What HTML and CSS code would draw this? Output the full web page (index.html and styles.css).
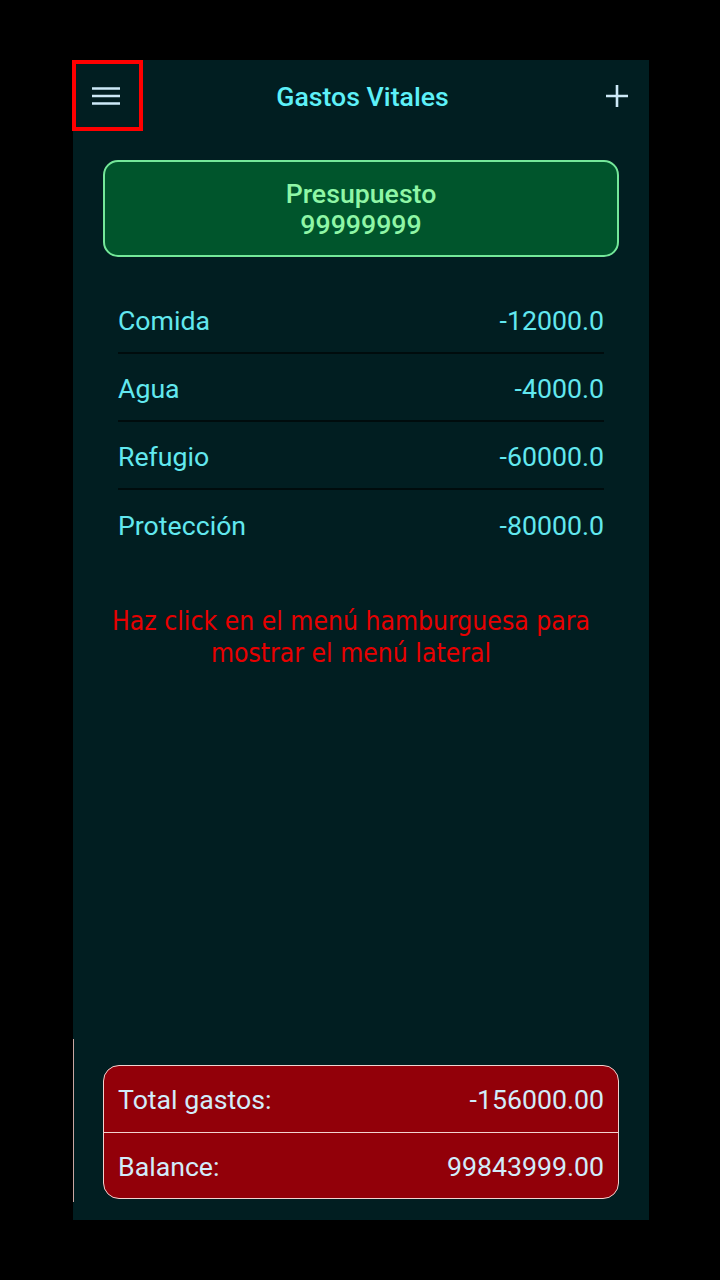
FILE: index.html
```html
<!DOCTYPE html>
<html lang="es">
<head>
<meta charset="utf-8">
<title>Gastos Vitales</title>
<link rel="stylesheet" href="styles.css">
</head>
<body>
<div class="stage">
  <div class="screen">
    <header class="topbar">
      <button class="icon-btn menu-btn" aria-label="Menú">
        <svg width="28" height="20" viewBox="0 0 28 20"><path d="M0 2.5H28M0 10H28M0 17.5H28" stroke="#cde9f7" stroke-width="2.6" fill="none"/></svg>
      </button>
      <h1 class="title">Gastos Vitales</h1>
      <button class="icon-btn add-btn" aria-label="Agregar">
        <svg width="24" height="24" viewBox="0 0 24 24"><path d="M12 1V23M1 12H23" stroke="#cde9f7" stroke-width="2.6" fill="none"/></svg>
      </button>
    </header>

    <section class="budget">
      <div class="budget-label">Presupuesto</div>
      <div class="budget-value">99999999</div>
    </section>

    <ul class="expenses">
      <li class="expense"><span>Comida</span><span>-12000.0</span></li>
      <li class="expense"><span>Agua</span><span>-4000.0</span></li>
      <li class="expense"><span>Refugio</span><span>-60000.0</span></li>
      <li class="expense"><span>Protección</span><span>-80000.0</span></li>
    </ul>

    <p class="hint">Haz click en el menú hamburguesa para<br>mostrar el menú lateral</p>

    <div class="spacer"></div>

    <section class="summary">
      <div class="summary-row"><span>Total gastos:</span><span>-156000.00</span></div>
      <div class="summary-row"><span>Balance:</span><span>99843999.00</span></div>
    </section>
    <div class="scroll-edge"></div>
  </div>
  <div class="highlight"></div>
</div>
</body>
</html>
```

FILE: styles.css
```css
* { box-sizing: border-box; }

html, body {
  margin: 0;
  padding: 0;
  background: #000;
}

body {
  width: 720px;
  height: 1280px;
  overflow: hidden;
  font-family: Roboto, "Liberation Sans", sans-serif;
}

.stage {
  position: relative;
  width: 720px;
  height: 1280px;
  padding: 60px 71px 60px 73px;
}

.screen {
  position: relative;
  width: 576px;
  height: 1160px;
  background: #011e21;
  display: flex;
  flex-direction: column;
}

.topbar {
  height: 74px;
  display: flex;
  align-items: center;
  justify-content: space-between;
  padding: 0 10px 0 5px;
}

.icon-btn {
  background: none;
  border: 0;
  padding: 0;
  margin: 0;
  display: flex;
  align-items: center;
  justify-content: center;
}

.menu-btn {
  width: 56px;
  height: 56px;
  margin-top: -2px;
}

.add-btn {
  width: 44px;
  height: 44px;
  margin-top: -2px;
}

.title {
  margin: 0;
  font-size: 26.7px;
  font-weight: 500;
  color: #5df0f8;
  margin-left: -4px;
}

.budget {
  margin: 26px 30px 0;
  height: 97px;
  border: 2px solid #74e89a;
  border-radius: 15px;
  background: #00552c;
  color: #8ff6a6;
  font-weight: 500;
  font-size: 26.7px;
  line-height: 31px;
  text-align: center;
  display: flex;
  flex-direction: column;
  justify-content: center;
  padding-top: 3px;
}

.expenses {
  list-style: none;
  margin: 29px 45px 0;
  padding: 0;
}

.expense {
  height: 68px;
  display: flex;
  align-items: center;
  justify-content: space-between;
  font-size: 26.7px;
  color: #62e8ef;
  border-bottom: 2px solid #000c0d;
  padding-top: 3px;
}

.expense:last-child {
  border-bottom: 0;
}

.hint {
  margin: 47px 0 0;
  padding-right: 20px;
  text-align: center;
  font-family: "DejaVu Sans Condensed", "DejaVu Sans", sans-serif;
  font-stretch: condensed;
  font-size: 26.3px;
  line-height: 32px;
  color: #e80000;
}

.spacer {
  flex: 1;
}

.summary {
  margin: 0 30px 21px;
  border: 1.5px solid #f2d2cf;
  border-radius: 16px;
  background: #920009;
  color: #d2ecfa;
  font-size: 26.7px;
  overflow: hidden;
}

.summary-row {
  height: 66px;
  display: flex;
  align-items: center;
  justify-content: space-between;
  padding: 2px 14px 0;
}

.summary-row + .summary-row {
  border-top: 1.5px solid #f2d2cf;
}

.scroll-edge {
  position: absolute;
  left: 0;
  top: 979px;
  width: 1px;
  height: 163px;
  background: #c9a7a2;
}

.highlight {
  position: absolute;
  left: 72px;
  top: 60px;
  width: 71px;
  height: 71px;
  border: 4px solid #ff0000;
}
```
